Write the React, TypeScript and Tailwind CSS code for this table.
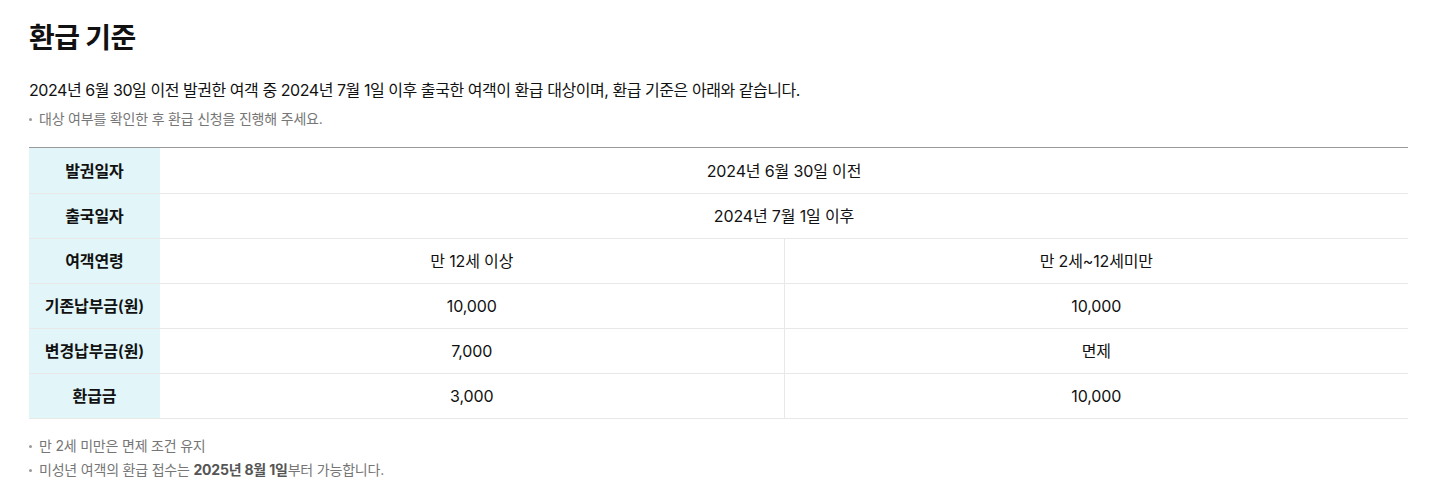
const FONT = { fontFamily: 'Inter, "Noto Sans CJK KR", sans-serif' };

type Row = { label: string; cells: string[] };

const rows: Row[] = [
  { label: '발권일자', cells: ['2024년 6월 30일 이전'] },
  { label: '출국일자', cells: ['2024년 7월 1일 이후'] },
  { label: '여객연령', cells: ['만 12세 이상', '만 2세~12세미만'] },
  { label: '기존납부금(원)', cells: ['10,000', '10,000'] },
  { label: '변경납부금(원)', cells: ['7,000', '면제'] },
  { label: '환급금', cells: ['3,000', '10,000'] },
];

function Note({ children }: { children: React.ReactNode }) {
  return (
    <p className="flex items-center text-[14px] leading-[20px] text-[#767676] tracking-[-0.2px]">
      <span className="mr-[7px] h-[3px] w-[3px] rounded-full bg-[#999]" />
      <span>{children}</span>
    </p>
  );
}

export default function App() {
  return (
    <div className="min-h-screen bg-white pl-[29px] pr-[27px] pt-[18px] text-[#111]" style={FONT}>
      <h2 className="text-[28px] font-bold leading-[40px] tracking-[-0.6px]">환급 기준</h2>

      <p className="mt-[20px] text-[16px] leading-[24px] tracking-[-0.45px]">
        2024년 6월 30일 이전 발권한 여객 중 2024년 7월 1일 이후 출국한 여객이 환급 대상이며, 환급 기준은 아래와 같습니다.
      </p>
      <div className="mt-[7px]">
        <Note>대상 여부를 확인한 후 환급 신청을 진행해 주세요.</Note>
      </div>

      <table className="mt-[18px] w-full table-fixed border-collapse border-t border-[#9a9a9a]">
        <colgroup>
          <col className="w-[131px]" />
          <col />
          <col />
        </colgroup>
        <tbody>
          {rows.map((r, idx) => (
            <tr key={r.label} className={`${idx === 0 ? 'h-[46px]' : 'h-[45px]'} border-b border-[#e8e8e8]`}>
              <th className="bg-[#e2f5f8] text-center text-[16px] font-semibold tracking-[-0.1px]">{r.label}</th>
              {r.cells.length === 1 ? (
                <td colSpan={2} className="text-center text-[16px] tracking-[-0.15px]">{r.cells[0]}</td>
              ) : (
                r.cells.map((c, i) => (
                  <td
                    key={i}
                    className={`text-center text-[16px] tracking-[-0.15px] ${i === 1 ? 'border-l border-[#e8e8e8]' : ''}`}
                  >
                    {c}
                  </td>
                ))
              )}
            </tr>
          ))}
        </tbody>
      </table>

      <div className="mt-[17px] flex flex-col gap-[4px]">
        <Note>만 2세 미만은 면제 조건 유지</Note>
        <Note>
          미성년 여객의 환급 접수는 <b className="font-bold text-[#555]">2025년 8월 1일</b>부터 가능합니다.
        </Note>
      </div>
    </div>
  );
}
